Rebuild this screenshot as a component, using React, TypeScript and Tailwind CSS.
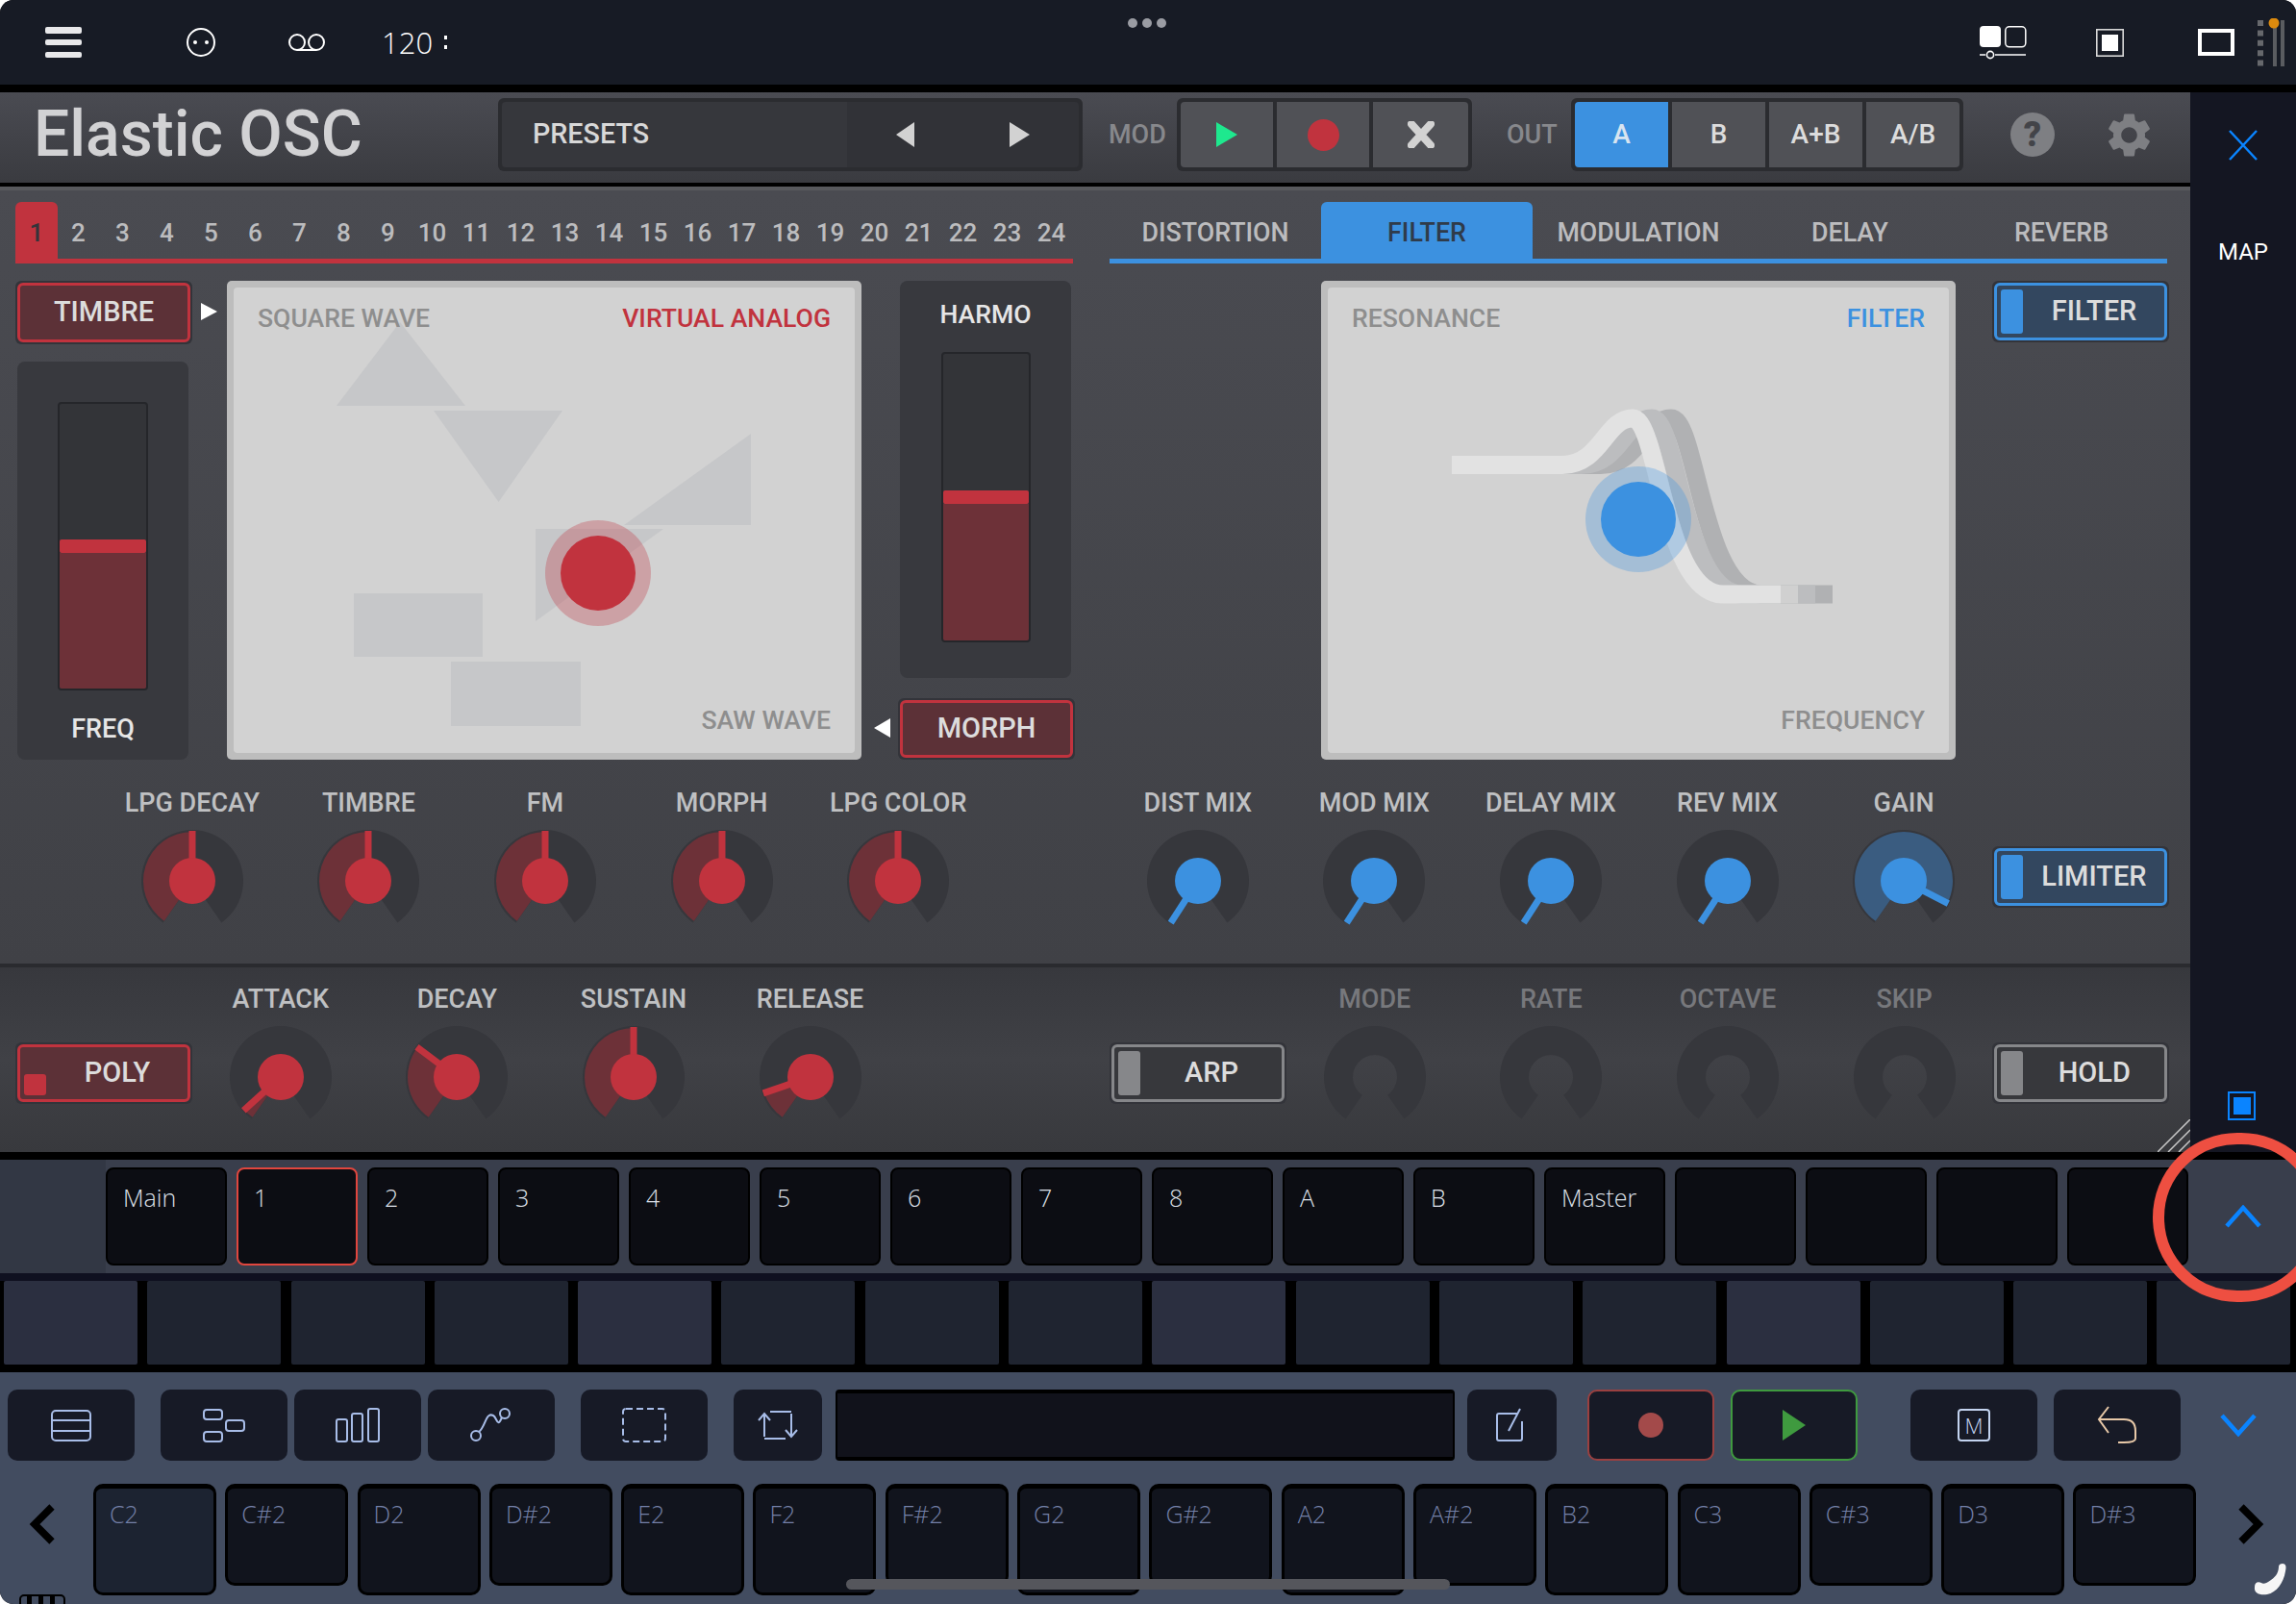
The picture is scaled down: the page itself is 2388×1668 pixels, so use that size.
import React from "react";
import { MdSettings } from "react-icons/md";

const STEPS = Array.from({ length: 23 }, (_, i) => String(i + 2));
const TABS = ["DISTORTION", "FILTER", "MODULATION", "DELAY", "REVERB"];
const TRACKS = ["Main", "1", "2", "3", "4", "5", "6", "7", "8", "A", "B", "Master", "", "", "", ""];
const KEYS = ["C2", "C#2", "D2", "D#2", "E2", "F2", "F#2", "G2", "G#2", "A2", "A#2", "B2", "C3", "C#3", "D3", "D#3"];
const RED = "#c1333e";
const BLUE = "#3c91e0";

function polar(r: number, deg: number) {
  const a = (deg * Math.PI) / 180;
  return [60 + r * Math.sin(a), 60 - r * Math.cos(a)];
}
function sector(r1: number, r2: number, a: number, b: number) {
  const [x1, y1] = polar(r2, a);
  const [x2, y2] = polar(r2, b);
  const [x3, y3] = polar(r1, b);
  const [x4, y4] = polar(r1, a);
  const large = b - a > 180 ? 1 : 0;
  return `M${x1} ${y1}A${r2} ${r2} 0 ${large} 1 ${x2} ${y2}L${x3} ${y3}A${r1} ${r1} 0 ${large} 0 ${x4} ${y4}Z`;
}

function Knob({ label, value, tone, dim }: { label: string; value?: number; tone?: "red" | "blue"; dim?: boolean }) {
  const color = tone === "blue" ? BLUE : RED;
  const sweep = tone === "blue" ? "#3a5c80" : "#6d3138";
  return (
    <div className="flex w-[183.6px] shrink-0 flex-col items-center">
      <div className={`h-[32px] text-[27px] leading-[32px] font-medium ${dim ? "text-[#77787c]" : "text-[#bfc0c2]"}`}>{label}</div>
      <svg className="mt-[5px]" width="120" height="120" viewBox="0 0 120 120">
        <path d={sector(23, 53, -145, 145)} fill="#36373c" />
        {!dim && value !== undefined && value > -145 && (
          <path d={sector(23, 51, -145, value)} fill={sweep} />
        )}
        {!dim && value !== undefined && (
          <>
            <line x1={polar(22, value)[0]} y1={polar(22, value)[1]} x2={polar(52, value)[0]} y2={polar(52, value)[1]} stroke={color} strokeWidth="7" />
            <circle cx="60" cy="60" r="24" fill={color} />
          </>
        )}
      </svg>
    </div>
  );
}

function Toggle({ label, tone, sw = "top", cls = "", h = "h-[64px]" }: { label: string; tone: "red" | "blue" | "gray"; sw?: "top" | "bottom" | "none"; cls?: string; h?: string }) {
  const map = {
    red: { border: "border-[#c1333e]", bg: "bg-[#5c3137]", knob: "bg-[#c1333e]" },
    blue: { border: "border-[#3c91e0]", bg: "bg-[#33475f]", knob: "bg-[#3c91e0]" },
    gray: { border: "border-[#86878a]", bg: "bg-[#37383c]", knob: "bg-[#86878a]" },
  }[tone];
  return (
    <div className={`${h} w-[184px] shrink-0 rounded-[6px] bg-[#33343a] p-[2px] ${cls}`}>
      <div className={`flex h-full items-stretch rounded-[6px] border-[3px] ${map.border} ${map.bg} p-[4px]`}>
        {sw !== "none" && (
          <div className={`w-[23px] shrink-0 rounded-[3px] ${map.knob} ${sw === "bottom" ? "mt-auto h-[22px]" : "h-full"}`} />
        )}
        <div className={`flex flex-1 items-center justify-center text-[29px] font-medium text-[#dcdcdc] ${sw !== "none" ? "pl-[5px]" : ""}`}>{label}</div>
      </div>
    </div>
  );
}

function VSlider({ top, fill, w, h }: { top: number; fill: number; w: string; h: string }) {
  return (
    <div className={`flex ${w} ${h} flex-col overflow-hidden rounded-[4px] border-[2px] border-[#25262a] bg-[#333438]`}>
      <div style={{ height: top }} />
      <div className="h-[14px] rounded-[2px] bg-[#c1333e]" />
      <div style={{ height: fill }} className="bg-[#6d3138]" />
    </div>
  );
}

function XYFrame({ children, art }: { children: React.ReactNode; art: React.ReactNode }) {
  return (
    <div className="relative h-[498px] w-[660px] shrink-0 rounded-[5px] bg-[#bdbdbd] p-[7px]">
      <div className="relative h-full w-full rounded-[4px] bg-[#d2d2d2]">
        <svg className="absolute inset-0" width="646" height="484" viewBox="0 0 646 484">
          {art}
        </svg>
        <div className="relative flex h-full flex-col justify-between px-[25px] pt-[16px] pb-[18px] text-[26.6px] leading-[32px] font-medium">
          {children}
        </div>
      </div>
    </div>
  );
}

const ic = { fill: "none", stroke: "#a8bde8", strokeWidth: 2 } as const;

function ToolBtn({ children, w = "w-[132px]", cls = "" }: { children?: React.ReactNode; w?: string; cls?: string }) {
  return (
    <div className={`flex h-[74px] ${w} shrink-0 items-center justify-center rounded-[10px] bg-[#171a26] ${cls}`}>{children}</div>
  );
}

export default function App() {
  return (
    <div className="relative flex h-[1668px] w-[2388px] flex-col overflow-hidden rounded-[14px] bg-black font-[Roboto,sans-serif] text-white">
      {/* status bar */}
      <div className="relative flex h-[88px] shrink-0 items-center bg-[#171b25]">
        <div className="ml-[47px] flex h-[32px] w-[38px] flex-col justify-between">
          <div className="h-[6.5px] rounded-[2px] bg-[#e8e8ea]" />
          <div className="h-[6.5px] rounded-[2px] bg-[#e8e8ea]" />
          <div className="h-[6.5px] rounded-[2px] bg-[#e8e8ea]" />
        </div>
        <svg className="ml-[109px]" width="30" height="30" viewBox="0 0 30 30">
          <circle cx="15" cy="15" r="14" fill="none" stroke="#fff" strokeWidth="2" />
          <circle cx="9" cy="15" r="2" fill="#fff" />
          <circle cx="21" cy="15" r="2" fill="#fff" />
        </svg>
        <svg className="ml-[75px]" width="40" height="20" viewBox="0 0 40 20">
          <circle cx="10" cy="10" r="8" fill="none" stroke="#fff" strokeWidth="2" />
          <circle cx="30" cy="10" r="8" fill="none" stroke="#fff" strokeWidth="2" />
          <path d="M10 18H30" stroke="#fff" strokeWidth="2" />
        </svg>
        <div className="ml-[58px] font-['Open_Sans',sans-serif] text-[31px] font-light text-white">120</div>
        <div className="ml-[12px] flex flex-col gap-[6px]">
          <div className="h-[4px] w-[3px] bg-white" />
          <div className="h-[4px] w-[3px] bg-white" />
        </div>
        <div className="absolute top-[19px] left-[1173px] flex gap-[5px]">
          <div className="h-[10px] w-[10px] rounded-full bg-[#9a9ca3]" />
          <div className="h-[10px] w-[10px] rounded-full bg-[#9a9ca3]" />
          <div className="h-[10px] w-[10px] rounded-full bg-[#9a9ca3]" />
        </div>
        <div className="ml-auto flex items-center">
          <svg width="50" height="40" viewBox="0 0 50 40">
            <rect x="1" y="3" width="22" height="22" rx="4" fill="#fff" />
            <rect x="27.8" y="3.8" width="21" height="21" rx="4" fill="none" stroke="#fff" strokeWidth="1.5" />
            <path d="M1 33H7M17 33H49" stroke="#fff" strokeWidth="1.6" />
            <circle cx="12" cy="33" r="3.6" fill="#171b25" stroke="#fff" strokeWidth="1.6" />
          </svg>
          <svg className="ml-[72px]" width="29" height="29" viewBox="0 0 29 29">
            <rect x="0.8" y="0.8" width="27.4" height="27.4" fill="none" stroke="#d8d8d8" strokeWidth="1.6" />
            <rect x="6" y="6" width="17" height="17" fill="#fff" />
          </svg>
          <svg className="ml-[77px]" width="38" height="28" viewBox="0 0 38 28">
            <rect x="2" y="2" width="34" height="24" fill="none" stroke="#fff" strokeWidth="4" />
          </svg>
          <svg className="mr-[12px] ml-[24px]" width="28" height="50" viewBox="0 0 28 50">
            <path d="M3 2V50" stroke="#66686c" strokeWidth="6" strokeDasharray="6 4.4" />
            <path d="M18 2V50" stroke="#5a5c60" strokeWidth="4" />
            <path d="M26 2V50" stroke="#5a5c60" strokeWidth="4" />
            <circle cx="17" cy="5" r="5.5" fill="#dc8a0e" />
          </svg>
        </div>
      </div>
      <div className="h-[8px] shrink-0 bg-black" />

      {/* plugin window */}
      <div className="flex h-[1102px] shrink-0">
        <div className="flex w-[2278px] shrink-0 flex-col">
          {/* header */}
          <div className="flex h-[94px] shrink-0 items-center bg-gradient-to-b from-[#4a4b52] to-[#3a3b40] pb-[6px]">
            <div className="ml-[35px] w-[483px] text-[66px] leading-none font-medium text-[#d2d2d4]">Elastic OSC</div>
            <div className="flex h-[76px] w-[608px] rounded-[6px] bg-[#2b2c30] p-[4px]">
              <div className="flex w-[359px] items-center rounded-l-[4px] bg-[#36373c] pl-[32px] text-[28.7px] font-medium text-[#d8d8d8]">PRESETS</div>
              <div className="flex flex-1 items-center rounded-r-[4px] bg-[#313237] pl-[51px]">
                <svg width="19" height="26" viewBox="0 0 19 26"><path d="M19 0V26L0 13Z" fill="#d2d2d2" /></svg>
                <svg className="ml-[99px]" width="21" height="26" viewBox="0 0 21 26"><path d="M0 0V26L21 13Z" fill="#d2d2d2" /></svg>
              </div>
            </div>
            <div className="w-[98px] pl-[27px] text-[27px] font-medium text-[#87888c]">MOD</div>
            <div className="flex h-[76px] w-[307px] gap-[4px] rounded-[6px] bg-[#2b2c30] p-[4px]">
              <div className="flex w-[96px] items-center justify-center rounded-l-[4px] bg-[#505156]">
                <svg width="22" height="26" viewBox="0 0 22 26"><path d="M0 0V26L22 13Z" fill="#1ee88e" /></svg>
              </div>
              <div className="flex w-[96px] items-center justify-center bg-[#505156]">
                <div className="h-[33px] w-[33px] rounded-full bg-[#c1333e]" />
              </div>
              <div className="flex flex-1 items-center justify-center rounded-r-[4px] bg-[#505156]">
                <svg width="28" height="28" viewBox="0 0 28 28"><path d="M4 3L24 25M24 3L4 25" stroke="#d2d2d2" strokeWidth="8" strokeLinecap="round" /></svg>
              </div>
            </div>
            <div className="w-[103px] pl-[36px] text-[27px] font-medium text-[#87888c]">OUT</div>
            <div className="flex h-[76px] w-[408px] gap-[4px] rounded-[6px] bg-[#2b2c30] p-[4px]">
              {["A", "B", "A+B", "A/B"].map((t, i) => (
                <div key={t} className={`flex flex-1 items-center justify-center text-[28px] font-medium ${i === 0 ? "rounded-l-[4px] bg-[#3c91e0] text-[#d8e4f0]" : "bg-[#505156] text-[#dcdcdc]"} ${i === 3 ? "rounded-r-[4px]" : ""}`}>{t}</div>
              ))}
            </div>
            <div className="ml-[49px] flex h-[46px] w-[46px] items-center justify-center rounded-full bg-[#7e7f83] text-[36px] leading-none font-black text-[#434449]">?</div>
            <MdSettings className="ml-[50px] text-[#7e7f83]" size={55} />
          </div>
          <div className="h-[4px] shrink-0 bg-black" />

          {/* main panel */}
          <div className="flex h-[808px] shrink-0 flex-col border-t-[4px] border-[#58595d] bg-gradient-to-b from-[#4a4b51] to-[#404146]">
            {/* tab row */}
            <div className="mt-[12px] flex h-[64px] shrink-0 pl-[16px]">
              <div className="flex h-[64px] w-[1100px] border-b-[5px] border-[#c1333e]">
                <div className="flex w-[44px] shrink-0 items-end justify-center rounded-t-[6px] bg-[#c1333e] pb-[11px] text-[26px] leading-[32px] font-medium text-[#33343a]">1</div>
                <div className="-ml-[1.5px] flex">
                  {STEPS.map((s) => (
                    <div key={s} className="flex w-[46px] shrink-0 items-end justify-center pb-[11px] text-[26px] leading-[32px] font-medium text-[#bcbcbe]">{s}</div>
                  ))}
                </div>
              </div>
              <div className="ml-[38px] flex w-[1100px] border-b-[5px] border-[#3c91e0]">
                {TABS.map((t) => (
                  <div key={t} className={`flex w-[220px] items-end justify-center pb-[11px] text-[26.8px] leading-[32px] font-medium ${t === "FILTER" ? "rounded-t-[6px] bg-[#3c91e0] text-[#2f3b4a]" : "text-[#bcbcbe]"}`}>{t}</div>
                ))}
              </div>
            </div>

            {/* editors */}
            <div className="mt-[18px] flex h-[498px] shrink-0 pl-[16px]">
              <div className="flex w-[184px] shrink-0 flex-col">
                <Toggle label="TIMBRE" tone="red" sw="none" h="h-[66px]" />
                <div className="mt-[18px] ml-[2px] flex h-[414px] w-[178px] flex-col items-center self-start rounded-[8px] bg-[#38393e]">
                  <div className="mt-[42px]"><VSlider top={142} fill={142} w="w-[94px]" h="h-[300px]" /></div>
                  <div className="mt-[24px] text-[27px] leading-[32px] font-medium text-[#e6e6e6]">FREQ</div>
                </div>
              </div>
              <div className="w-[36px] shrink-0 pt-[23px] pl-[9px]">
                <svg width="17" height="18" viewBox="0 0 17 18"><path d="M0 0V18L17 9Z" fill="#fff" /></svg>
              </div>
              <XYFrame
                art={
                  <g transform="translate(-243 -299)" fill="#c6c7c9">
                    <path d="M350 422L416 335L484 422Z" />
                    <path d="M451 427H585L518.6 522Z" />
                    <path d="M781 451V546H649Z" />
                    <path d="M557 550H690L557 646Z" />
                    <rect x="368" y="617" width="134" height="66" />
                    <rect x="469" y="688" width="135" height="67" />
                    <circle cx="622" cy="596" r="55" fill={RED} fillOpacity="0.3" />
                    <circle cx="622" cy="596" r="39" fill={RED} />
                  </g>
                }
              >
                <div className="flex justify-between">
                  <span className="text-[#8e8e8e]">SQUARE WAVE</span>
                  <span className="text-[#c1333e]">VIRTUAL ANALOG</span>
                </div>
                <div className="text-right text-[#8e8e8e]">SAW WAVE</div>
              </XYFrame>
              <div className="flex w-[40px] shrink-0 items-end pb-[23px] pl-[13px]">
                <svg width="17" height="20" viewBox="0 0 17 20"><path d="M17 0V20L0 10Z" fill="#fff" /></svg>
              </div>
              <div className="flex w-[182px] shrink-0 flex-col">
                <div className="flex h-[414px] w-[178px] flex-col items-center rounded-[8px] bg-[#38393e]">
                  <div className="mt-[19px] h-[32px] text-[26.6px] leading-[32px] font-medium text-[#e6e6e6]">HARMO</div>
                  <div className="mt-[23px]"><VSlider top={142} fill={142} w="w-[93px]" h="h-[302px]" /></div>
                </div>
                <Toggle label="MORPH" tone="red" sw="none" cls="mt-[21px] -ml-[2px]" />
              </div>
              <div className="w-[256px] shrink-0" />
              <XYFrame
                art={
                  <g transform="translate(-1381 -299)">
                    <path d="M1550 483.5H1665C1705 483.5 1710 435 1738 435C1765 435 1770 618 1832 618H1906" fill="none" stroke="#b0b1b3" strokeWidth="19" />
                    <path d="M1530 483.5H1645C1685 483.5 1690 435 1718 435C1745 435 1750 618 1812 618H1888" fill="none" stroke="#bcbdbf" strokeWidth="19" />
                    <path d="M1510 483.5H1625C1665 483.5 1670 435 1698 435C1725 435 1730 618 1792 618H1852" fill="none" stroke="#e2e2e2" strokeWidth="19" />
                    <rect x="1852" y="608.5" width="18" height="19" fill="#d0d0d0" />
                    <circle cx="1704" cy="540" r="55" fill={BLUE} fillOpacity="0.3" />
                    <circle cx="1704" cy="540" r="39" fill={BLUE} />
                  </g>
                }
              >
                <div className="flex justify-between">
                  <span className="text-[#8e8e8e]">RESONANCE</span>
                  <span className="text-[#3c91e0]">FILTER</span>
                </div>
                <div className="text-right text-[#8e8e8e]">FREQUENCY</div>
              </XYFrame>
              <div className="ml-[38px]">
                <Toggle label="FILTER" tone="blue" />
              </div>
            </div>

            {/* knobs row */}
            <div className="mt-[29px] flex pl-[108px]">
              {["LPG DECAY", "TIMBRE", "FM", "MORPH", "LPG COLOR"].map((l) => (
                <Knob key={l} label={l} value={0} />
              ))}
              <div className="w-[128px] shrink-0" />
              {["DIST MIX", "MOD MIX", "DELAY MIX", "REV MIX"].map((l) => (
                <Knob key={l} label={l} value={-147} tone="blue" />
              ))}
              <Knob label="GAIN" value={117} tone="blue" />
              <Toggle label="LIMITER" tone="blue" cls="mt-[61px]" />
            </div>
          </div>
          <div className="h-[4px] shrink-0 bg-[#2a2b2f]" />

          {/* envelope */}
          <div className="relative flex h-[192px] shrink-0 bg-gradient-to-b from-[#37383d] via-[#404146] to-[#38393d] pt-[17px] pl-[16px]">
            <Toggle label="POLY" tone="red" sw="bottom" cls="mt-[61px]" />
            <Knob label="ATTACK" value={-132} />
            <Knob label="DECAY" value={-53} />
            <Knob label="SUSTAIN" value={0} />
            <Knob label="RELEASE" value={-109} />
            <div className="w-[219.6px] shrink-0" />
            <Toggle label="ARP" tone="gray" cls="mt-[61px]" />
            <Knob label="MODE" dim />
            <Knob label="RATE" dim />
            <Knob label="OCTAVE" dim />
            <Knob label="SKIP" dim />
            <Toggle label="HOLD" tone="gray" cls="mt-[61px]" />
            <svg className="absolute right-0 bottom-0" width="34" height="34" viewBox="0 0 34 34">
              <path d="M0 34L34 0M11 34L34 11M22 34L34 22" stroke="#c8c8c8" strokeWidth="1.5" />
            </svg>
          </div>
        </div>

        {/* sidebar */}
        <div className="flex flex-1 flex-col items-center bg-[#141622]">
          <svg className="mt-[39px]" width="32" height="32" viewBox="0 0 32 32">
            <path d="M2 1L30 31M30 1L2 31" stroke="#0a84ff" strokeWidth="2.5" />
          </svg>
          <div className="mt-[80px] text-[24px] leading-[30px] text-white">MAP</div>
          <div className="mt-auto mb-[33px] ml-[-3px] flex h-[30px] w-[29px] items-center justify-center border-[2px] border-[#0a84ff]">
            <div className="h-[18px] w-[18px] bg-[#0a84ff]" />
          </div>
        </div>
      </div>
      <div className="h-[8px] shrink-0 bg-black" />

      {/* tracks */}
      <div className="flex h-[118px] shrink-0 items-center bg-[#393e4c]">
        <div className="h-full w-[110px] shrink-0 bg-[#323744]" />
        <div className="flex gap-[10px]">
          {TRACKS.map((t, i) => (
            <div key={i} className={`h-[102px] w-[126px] shrink-0 rounded-[8px] border-[2px] bg-[#0c0d13] pt-[11px] pl-[16px] font-['Open_Sans',sans-serif] text-[25px] leading-[36px] font-light text-[#dfe2ea] ${i === 1 ? "border-[#e0463e]" : "border-black"}`}>{t}</div>
          ))}
        </div>
        <div className="flex flex-1 justify-center pl-[2px]">
          <svg width="38" height="24" viewBox="0 0 38 24"><path d="M2 22L19 3L36 22" fill="none" stroke="#0a84ff" strokeWidth="4.5" /></svg>
        </div>
      </div>
      <div className="h-[8px] shrink-0 bg-[#0f1020]" />

      {/* pads */}
      <div className="flex h-[95px] shrink-0 gap-[10.3px] border-b-[8px] border-black bg-black pl-[4px]">
        {Array.from({ length: 16 }, (_, i) => (
          <div key={i} className={`h-[87px] w-[139px] shrink-0 rounded-[2px] ${i % 4 === 0 ? "bg-[#2b2f40]" : "bg-[#1f2430]"}`} />
        ))}
      </div>

      {/* bottom */}
      <div className="relative flex flex-1 flex-col bg-[#424c60]">
        <div className="mt-[18px] flex h-[74px] shrink-0 pl-[8px]">
          <ToolBtn>
            <svg width="42" height="33" viewBox="0 0 42 33" {...ic}><rect x="1" y="1" width="40" height="31" rx="4" /><path d="M1 11H41M1 22H41" /></svg>
          </ToolBtn>
          <ToolBtn cls="ml-[27px]">
            <svg width="44" height="35" viewBox="0 0 44 35" {...ic}><rect x="1" y="1" width="19" height="10" rx="3" /><rect x="1" y="24" width="19" height="10" rx="3" /><rect x="24" y="12" width="19" height="11" rx="3" /></svg>
          </ToolBtn>
          <ToolBtn cls="ml-[7px]">
            <svg width="46" height="36" viewBox="0 0 46 36" {...ic}><rect x="1" y="12" width="11" height="23" rx="2" /><rect x="17" y="6" width="11" height="29" rx="2" /><rect x="34" y="1" width="11" height="34" rx="2" /></svg>
          </ToolBtn>
          <ToolBtn cls="ml-[7px]">
            <svg width="44" height="36" viewBox="0 0 44 36" {...ic}><circle cx="6" cy="29" r="5" /><circle cx="36" cy="6" r="5" /><path d="M9 25C16 20 16 4 24 8C28 10 28 22 33 10" /></svg>
          </ToolBtn>
          <ToolBtn cls="ml-[27px]">
            <svg width="46" height="36" viewBox="0 0 46 36" {...ic}><rect x="1" y="1" width="44" height="34" rx="3" strokeDasharray="7 4" /></svg>
          </ToolBtn>
          <ToolBtn w="w-[92px]" cls="ml-[27px]">
            <svg width="42" height="32" viewBox="0 0 42 32" {...ic}><path d="M7 28V4M1 11L7 4L13 11" /><path d="M35 4V28M29 21L35 28L41 21" /><path d="M7 30H29M13 2H35" /></svg>
          </ToolBtn>
          <div className="ml-[14px] h-[74px] w-[644px] shrink-0 rounded-[4px] border-t-[4px] border-r-[2px] border-b-[4px] border-l-[2px] border-black bg-[#11121b]" />
          <ToolBtn w="w-[93px]" cls="ml-[13px]">
            <svg width="36" height="36" viewBox="0 0 36 36" {...ic}><path d="M24 6H4Q2 6 2 8V32Q2 34 4 34H26Q28 34 28 32V14" /><path d="M14 24L26 1" /></svg>
          </ToolBtn>
          <ToolBtn cls="ml-[32px] border-[2px] border-[#9a4040]">
            <div className="h-[26px] w-[26px] rounded-full bg-[#a34a4a]" />
          </ToolBtn>
          <ToolBtn cls="ml-[17px] border-[2px] border-[#3f9a3f]">
            <svg width="24" height="32" viewBox="0 0 24 32"><path d="M0 0V32L24 16Z" fill="#3f9a3f" /></svg>
          </ToolBtn>
          <ToolBtn cls="ml-[55px]">
            <div className="flex h-[34px] w-[34px] items-center justify-center rounded-[4px] border-[2px] border-[#c4d4f0] font-['Open_Sans',sans-serif] text-[22px] font-light text-[#c4d4f0]">M</div>
          </ToolBtn>
          <ToolBtn cls="ml-[17px]">
            <svg width="42" height="40" viewBox="0 0 42 40" fill="none" stroke="#e8c9a8" strokeWidth="2"><path d="M12 1L2 14L12 28" /><path d="M2 14H28Q40 14 40 26V34Q40 38 28 38H22" /></svg>
          </ToolBtn>
          <div className="flex flex-1 items-center justify-center">
            <svg width="38" height="24" viewBox="0 0 38 24"><path d="M2 2L19 21L36 2" fill="none" stroke="#0a84ff" strokeWidth="4.5" /></svg>
          </div>
        </div>
        <div className="mt-[24px] flex shrink-0 items-start">
          <div className="flex h-[116px] w-[97px] items-center pb-[32px] pl-[30px]">
            <svg width="28" height="42" viewBox="0 0 28 42"><path d="M24 3L6 21L24 39" fill="none" stroke="#000" strokeWidth="7.5" /></svg>
          </div>
          <div className="flex gap-[9.3px]">
            {KEYS.map((k, i) => (
              <div key={k} className={`w-[128px] shrink-0 rounded-[10px] border-[3px] border-t-[5px] border-black pt-[8px] pl-[14px] font-['Open_Sans',sans-serif] text-[25px] leading-[36px] font-light text-[#7480a8] ${k.includes("#") ? "h-[106px]" : "h-[116px]"} ${i === 0 ? "bg-[#1c2331]" : "bg-[#11141d]"}`}>{k}</div>
            ))}
          </div>
          <div className="flex h-[116px] flex-1 items-center pb-[32px] pl-[43px]">
            <svg width="28" height="42" viewBox="0 0 28 42"><path d="M4 3L22 21L4 39" fill="none" stroke="#000" strokeWidth="7.5" /></svg>
          </div>
        </div>
        {/* overlays */}
        <div className="absolute top-[215px] left-[880px] h-[11px] w-[628px] rounded-full bg-[#55565c]" />
        <svg className="absolute top-[231px] left-[20px]" width="48" height="10" viewBox="0 0 48 10">
          <rect x="1" y="1" width="46" height="12" rx="4" fill="none" stroke="#000" strokeWidth="2" />
          <path d="M10.5 1V10M22.5 1V10M34.5 1V10" stroke="#000" strokeWidth="5" />
        </svg>
        <svg className="absolute top-[199px] left-[2344px]" width="36" height="34" viewBox="0 0 36 34">
          <path d="M30 0C34 0 34 4 33 8C31 20 24 30 14 32C6 33 0 31 1 24C1 20 4 18 8 20C10 22 14 20 18 17C24 13 26 8 26 3C26 1 28 0 30 0Z" fill="#f6f6f6" />
        </svg>
      </div>

      {/* red highlight circle */}
      <div className="absolute top-[1178px] left-[2239px] h-[176px] w-[180px] rounded-full border-[12px] border-[#ee4f41]" />
    </div>
  );
}
